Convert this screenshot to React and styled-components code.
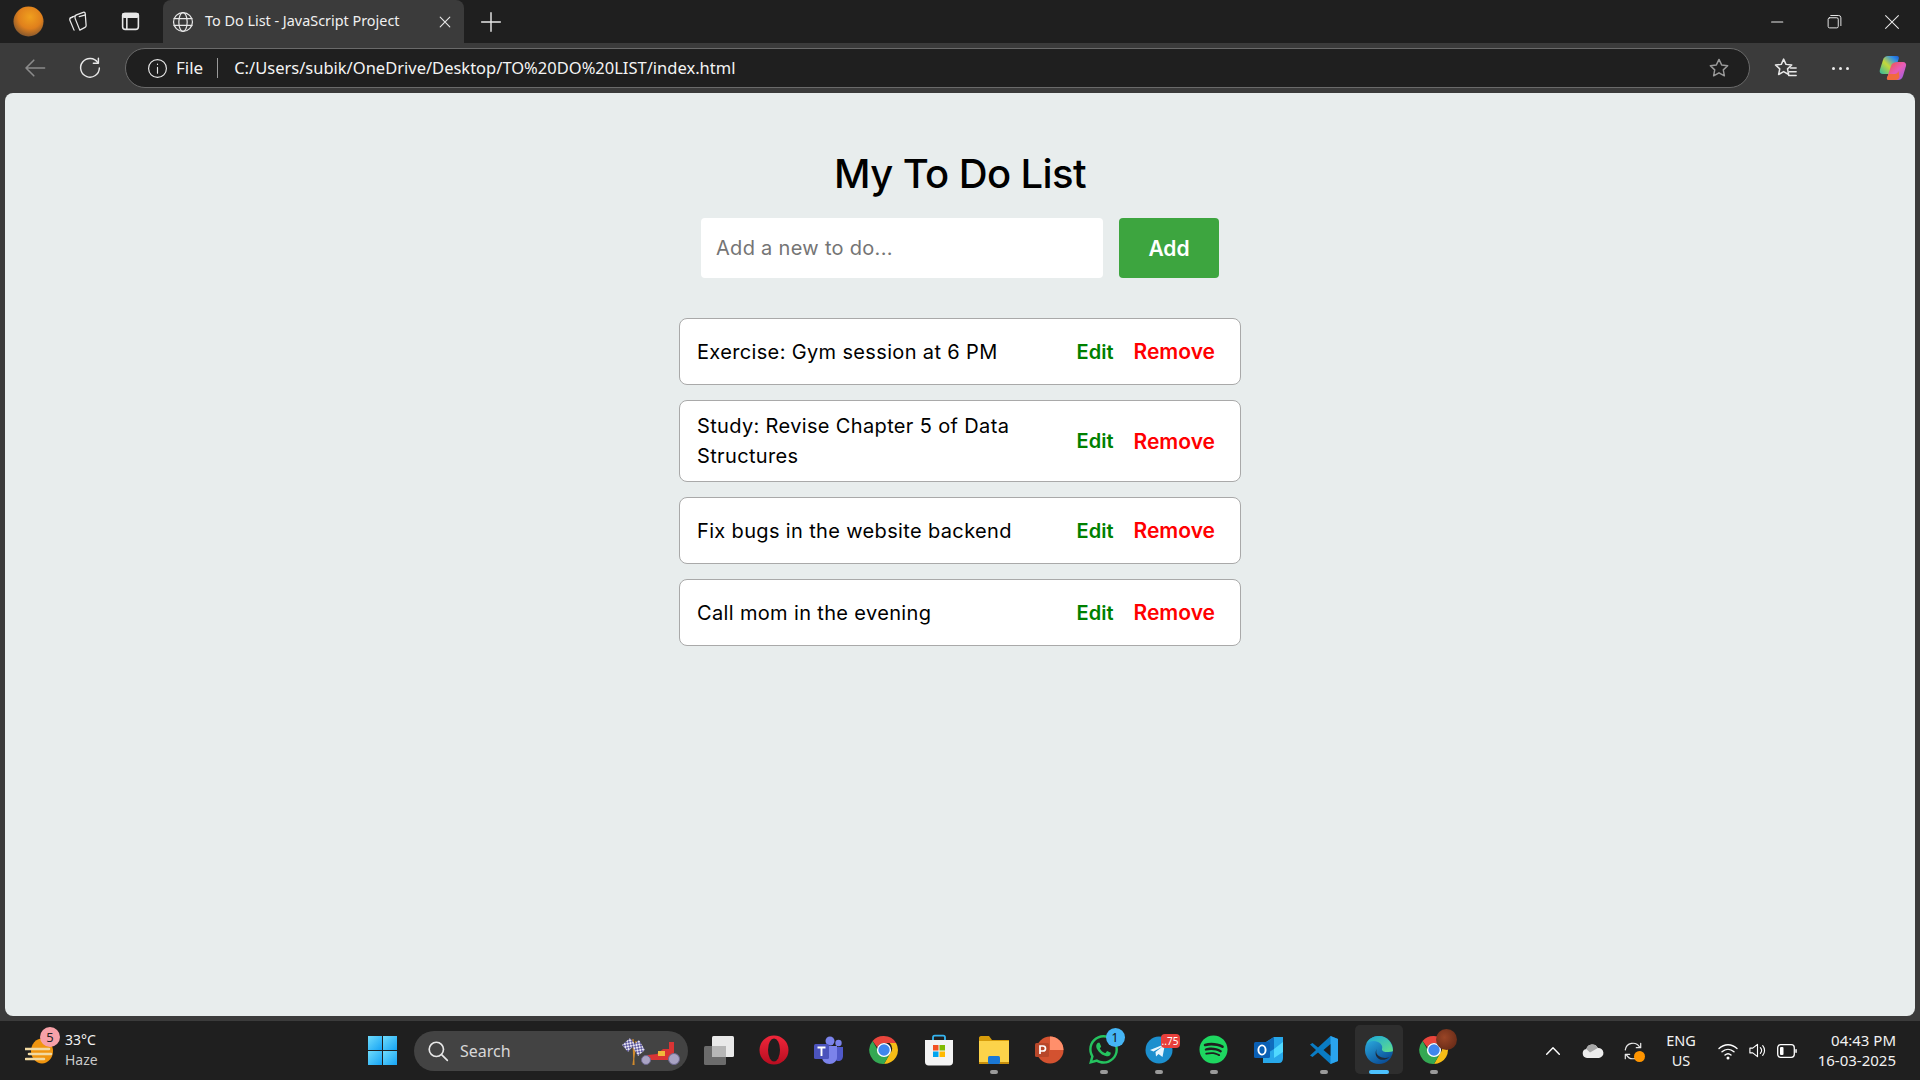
import React from 'react';
import styled, { createGlobalStyle } from 'styled-components';
import { FaSpotify, FaWhatsapp } from 'react-icons/fa';

const GlobalStyle = createGlobalStyle`
  * { box-sizing: border-box; }
  html, body { margin: 0; height: 100%; overflow: hidden; }
  body { font-family: "Noto Sans", "Open Sans", sans-serif; background: #3b3b3b; }
`;

const todos = [
  'Exercise: Gym session at 6 PM',
  'Study: Revise Chapter 5 of Data Structures',
  'Fix bugs in the website backend',
  'Call mom in the evening',
];

const Line = ({ size = 20, children, color = '#e8e8e8', sw = 1.3 }) => (
  <svg width={size} height={size} viewBox="0 0 20 20" fill="none" stroke={color} strokeWidth={sw} strokeLinecap="round" strokeLinejoin="round">
    {children}
  </svg>
);

const ProfileBall = () => (
  <svg width="31" height="31" viewBox="0 0 32 32">
    <defs>
      <radialGradient id="ball" cx="55%" cy="35%" r="70%">
        <stop offset="0" stopColor="#f0a01e" />
        <stop offset="0.55" stopColor="#e0801c" />
        <stop offset="1" stopColor="#7a5230" />
      </radialGradient>
    </defs>
    <circle cx="16" cy="16" r="15.5" fill="url(#ball)" />
  </svg>
);

const GlobeIcon = () => (
  <Line size={22} sw={1.1}>
    <circle cx="10" cy="10" r="8.6" />
    <ellipse cx="10" cy="10" rx="3.8" ry="8.6" />
    <path d="M1.8 7h16.4M1.8 13h16.4" />
  </Line>
);

const StarOutline = ({ color }) => (
  <Line size={22} color={color}>
    <path d="M10 2.2l2.4 5 5.5.7-4 3.8 1 5.4-4.9-2.7-4.9 2.7 1-5.4-4-3.8 5.5-.7z" />
  </Line>
);

const Copilot = () => (
  <svg width="28" height="28" viewBox="0 0 28 28">
    <defs>
      <linearGradient id="cpA" x1="0" y1="1" x2="1" y2="0">
        <stop offset="0" stopColor="#2bb6a3" />
        <stop offset="0.45" stopColor="#c6d83a" />
        <stop offset="0.8" stopColor="#2f8fe8" />
        <stop offset="1" stopColor="#1e58d0" />
      </linearGradient>
      <linearGradient id="cpB" x1="0" y1="0" x2="1" y2="1">
        <stop offset="0" stopColor="#f0533a" />
        <stop offset="0.5" stopColor="#e85cb5" />
        <stop offset="1" stopColor="#8f5de8" />
      </linearGradient>
    </defs>
    <path d="M9 2h9c1.5 0 2.2 1 1.8 2.4L16 16c-1 3-2.4 4-5 4H4c-2.5 0-3.8-1.6-3.2-4L4 6c.9-2.8 2.4-4 5-4z" fill="url(#cpA)" />
    <path d="M19 8h5c2.3 0 3.6 1.8 3 4l-3 10c-.9 2.7-2.4 4-5 4h-9c-1.5 0-2.2-1-1.8-2.4L12 12c1-3 3.4-4 7-4z" fill="url(#cpB)" />
    <path d="M10 20h6c1.6 0 2.8-1 3.5-3l1 6c-.6 2-2 3-4 3h-7c-1.4 0-2-1-1.5-2.4z" fill="#f26a3d" />
  </svg>
);

const ChromeIcon = () => (
  <svg width="30" height="30" viewBox="0 0 30 30">
    <path d="M15 1a14 14 0 0 1 12.1 7H15a7 7 0 0 0-6.6 4.6L3.6 6A14 14 0 0 1 15 1z" fill="#e8453c" />
    <path d="M27.1 8A14 14 0 0 1 15 29l6-10.5a7 7 0 0 0-.4-10.5z" fill="#f6bd16" />
    <path d="M15 29A14 14 0 0 1 3.6 6l5.9 10.2A7 7 0 0 0 21 18.5L15 29z" fill="#34a853" />
    <circle cx="15" cy="15" r="6.4" fill="#3f86ee" stroke="#fff" strokeWidth="1.4" />
  </svg>
);

const apps = [
  {
    key: 'copy',
    icon: (
      <svg width="32" height="30" viewBox="0 0 32 30">
        <rect x="1" y="11" width="22" height="19" rx="1.5" fill="#6b6b6b" />
        <rect x="9" y="1" width="22" height="21" rx="1.5" fill="#e9e9e9" />
        <rect x="9" y="11" width="14" height="11" fill="#b6b6b6" />
      </svg>
    ),
  },
  {
    key: 'opera',
    icon: (
      <svg width="30" height="30" viewBox="0 0 30 30">
        <defs>
          <linearGradient id="operaRed" x1="0" y1="0" x2="0" y2="1">
            <stop offset="0" stopColor="#f0263a" />
            <stop offset="1" stopColor="#b80d20" />
          </linearGradient>
        </defs>
        <ellipse cx="15" cy="15" rx="14.5" ry="14.5" fill="url(#operaRed)" />
        <ellipse cx="15" cy="15" rx="6" ry="11.5" fill="#1f1f1f" />
      </svg>
    ),
  },
  {
    key: 'teams',
    icon: (
      <svg width="32" height="30" viewBox="0 0 32 30">
        <circle cx="25.5" cy="8" r="3.2" fill="#7b83eb" />
        <circle cx="17" cy="6" r="4.5" fill="#7b83eb" />
        <path d="M21 12h9v9c0 3-2 5-4.5 5S21 24 21 21z" fill="#5059c9" />
        <path d="M9 11h15v11c0 4-3 7-7.5 7S9 26 9 22z" fill="#7b83eb" />
        <rect x="1" y="9" width="15" height="15" rx="1.5" fill="#4b53bc" />
        <path d="M4.5 12.5h8M8.5 12.5v8.5" stroke="#fff" strokeWidth="1.9" />
      </svg>
    ),
  },
  { key: 'chrome', icon: <ChromeIcon /> },
  {
    key: 'store',
    icon: (
      <svg width="30" height="32" viewBox="0 0 30 32">
        <path d="M9 7V3.5c0-1 .7-1.8 1.8-1.8h8.4c1.1 0 1.8.8 1.8 1.8V7" fill="none" stroke="#35b4ef" strokeWidth="1.8" />
        <path d="M1 6h28v22c0 2-1.4 3.5-3.5 3.5h-21C2.4 31.5 1 30 1 28z" fill="#f3f3f3" />
        <rect x="9" y="11" width="5.5" height="5.5" fill="#f25022" />
        <rect x="15.5" y="11" width="5.5" height="5.5" fill="#7fba00" />
        <rect x="9" y="17.5" width="5.5" height="5.5" fill="#00a4ef" />
        <rect x="15.5" y="17.5" width="5.5" height="5.5" fill="#ffb900" />
      </svg>
    ),
  },
  {
    key: 'files',
    running: true,
    icon: (
      <svg width="30" height="28" viewBox="0 0 30 28">
        <path d="M0 2c0-1 .7-2 2-2h8l3 4h17v24H0z" fill="#d79c0a" />
        <rect x="0" y="5" width="30" height="23" fill="#fcd34a" />
        <rect x="0" y="26" width="30" height="2" fill="#c98f0c" />
        <rect x="9" y="20" width="12" height="8" rx="1.5" fill="#1a78d6" />
      </svg>
    ),
  },
  {
    key: 'ppt',
    icon: (
      <svg width="30" height="30" viewBox="0 0 30 30">
        <circle cx="16" cy="15" r="13.5" fill="#d35230" />
        <path d="M16 1.5A13.5 13.5 0 0 1 29.5 15H16z" fill="#ff8f6b" />
        <rect x="1" y="8" width="14" height="14" rx="1.5" fill="#b7472a" />
        <path d="M6 19v-8h3a2.5 2.5 0 0 1 0 5H6" fill="none" stroke="#fff" strokeWidth="1.7" />
      </svg>
    ),
  },
  { key: 'whatsapp', running: true, badge: '1', icon: <FaWhatsapp size={33} color="#25c35f" /> },
  {
    key: 'telegram',
    running: true,
    badge: '..75',
    badgeRed: true,
    icon: (
      <svg width="30" height="30" viewBox="0 0 30 30">
        <circle cx="15" cy="15" r="13.5" fill="#1c8fce" />
        <path d="M6 15l15-6-2.5 13-4-3-2.5 2.5-.5-4.5 7-5.5-9 5z" fill="#e8f6fd" />
      </svg>
    ),
  },
  { key: 'spotify', running: true, icon: <FaSpotify size={29} color="#1ed760" /> },
  {
    key: 'outlook',
    icon: (
      <svg width="30" height="28" viewBox="0 0 30 28">
        <path d="M9 8l11-7h9v21c0 3-1.5 5-4 5H9z" fill="#28a8ea" />
        <path d="M9 8l11-7v12l-11 7z" fill="#0f6cbd" />
        <path d="M20 13l9-7v10l-9 6z" fill="#50d9ff" />
        <rect x="0" y="6" width="16" height="16" rx="1.5" fill="#0a5fb4" />
        <ellipse cx="8" cy="14" rx="3.6" ry="4.6" fill="none" stroke="#fff" strokeWidth="1.9" />
      </svg>
    ),
  },
  {
    key: 'vscode',
    running: true,
    icon: (
      <svg width="30" height="30" viewBox="0 0 30 30">
        <path d="M21.5 1L29 4v22l-7.5 3L9 17.5 3.5 22 1 20.5 7 15 1 9.500 3.500 8 9 12.500z" fill="#0a7cc4" />
        <path d="M21.5 1L29 4v22l-7.5 3z" fill="#2aa4ee" />
        <path d="M21.5 9l-7 6 7 6z" fill="#1f1f1f" />
      </svg>
    ),
  },
  {
    key: 'edge',
    active: true,
    icon: (
      <svg width="30" height="30" viewBox="0 0 30 30">
        <defs>
          <linearGradient id="edgeA" x1="0" y1="0" x2="0.6" y2="1">
            <stop offset="0" stopColor="#2fb6e8" />
            <stop offset="1" stopColor="#0b4f98" />
          </linearGradient>
          <linearGradient id="edgeB" x1="0" y1="0" x2="1" y2="1">
            <stop offset="0" stopColor="#1aa7dc" />
            <stop offset="1" stopColor="#62e08a" />
          </linearGradient>
        </defs>
        <circle cx="15" cy="15" r="14" fill="url(#edgeA)" />
        <path d="M29 16C29 8 23 1 15 1 9 1 4 4 2 9c3-3 8-4 12-2 3 1.5 5 4 4 7-.5 1.5 1.5 3 4.5 3 3.5 0 6.5-.5 6.5-1z" fill="url(#edgeB)" />
        <path d="M13 14c-2.5 3-1.5 8 2 10 3 1.5 7 1 10-1.5L28 20c-2 2.5-6 3.5-10 2.5-5-1.5-7-5-5-8.500z" fill="#1f2a38" />
      </svg>
    ),
  },
  {
    key: 'chromeProfile',
    running: true,
    icon: <ChromeIcon />,
    avatar: true,
  },
];

export default function App() {
  return (
    <Window>
      <GlobalStyle />
      <TabStrip>
        <StripSlot $w={56}><ProfileBall /></StripSlot>
        <StripSlot $w={42}>
          <Line size={23} sw={1.1}>
            <path d="M8.5 4.500l6.500-2.500c.8-.3 1.500.2 1.700 1l.8 10.500c0 .8-.3 1.300-1 1.600l-4.500 2.400-4-10c-.3-.8-.2-2.500.5-3z" />
            <path d="M6 5.800L4 7c-.7.4-1 1-.7 1.800L7 17.500" />
            <path d="M8.500 4.800L3.500 7M11.500 5.800l5.500-1.500" />
          </Line>
        </StripSlot>
        <StripSlot $w={65}>
          <Line size={21} sw={1.5}>
            <rect x="2.5" y="2.5" width="15" height="15" rx="2.5" />
            <rect x="2.5" y="2.5" width="15" height="3.5" rx="1.5" fill="#e8e8e8" />
            <path d="M6.500 3v14" />
          </Line>
        </StripSlot>
        <ActiveTab>
          <GlobeIcon />
          <TabTitle>To Do List - JavaScript Project</TabTitle>
          <TabClose>
            <Line size={16} sw={1.4}><path d="M4 4l12 12M16 4L4 16" /></Line>
          </TabClose>
        </ActiveTab>
        <StripSlot $w={54}>
          <Line size={22} sw={1.3}><path d="M10 1.500v17M1.500 10h17" /></Line>
        </StripSlot>
        <WindowControls>
          <StripSlot $w={57}><Line size={16}><path d="M2 10h14" /></Line></StripSlot>
          <StripSlot $w={57}>
            <Line size={15}>
              <rect x="1.5" y="5" width="13.5" height="13.5" rx="2" />
              <path d="M5 2h10.500a3 3 0 0 1 3 3v10.500" />
            </Line>
          </StripSlot>
          <StripSlot $w={57}><Line size={16}><path d="M2 2l16 16M18 2L2 18" /></Line></StripSlot>
        </WindowControls>
      </TabStrip>

      <Toolbar>
        <StripSlot $w={55}>
          <Line size={24} color="#8b8b8b"><path d="M18 10H2.500M9 3.500L2.500 10 9 16.500" /></Line>
        </StripSlot>
        <StripSlot $w={55}>
          <Line size={24} sw={1.2}>
            <path d="M16.500 5.500A7.800 7.800 0 1 0 17.800 10" />
            <path d="M17 1.800v4.200h-4.200" />
          </Line>
        </StripSlot>
        <AddressBar>
          <Line size={21} sw={1.1}>
            <circle cx="10" cy="10" r="8.5" />
            <path d="M10 9v5.500M10 5.800v.4" />
          </Line>
          <FileLabel>File</FileLabel>
          <AddressDivider />
          <AddressUrl>C:/Users/subik/OneDrive/Desktop/TO%20DO%20LIST/index.html</AddressUrl>
          <StarHolder><StarOutline color="#9a9a9a" /></StarHolder>
        </AddressBar>
        <StripSlot $w={55}>
          <Line size={25} sw={1.2}>
            <path d="M8.500 2.500l1.900 4.200 4.600.5-3.400 3.100.9 4.500-4-2.300-4 2.300.9-4.500-3.400-3.100 4.600-.5z" />
            <path d="M14 9.500h4.500M13 12.500h5.500M12.500 15.500h6" />
          </Line>
        </StripSlot>
        <StripSlot $w={55}><MoreDots><i /><i /><i /></MoreDots></StripSlot>
        <StripSlot $w={50}><Copilot /></StripSlot>
      </Toolbar>

      <Page>
        <Title>My To Do List</Title>
        <AddForm onSubmit={(e) => e.preventDefault()}>
          <TodoInput placeholder="Add a new to do..." readOnly />
          <AddButton type="button">Add</AddButton>
        </AddForm>
        <TodoList>
          {todos.map((t) => (
            <TodoItem key={t}>
              <TodoText>{t}</TodoText>
              <Actions>
                <ActionButton type="button" $color="#008000" $size={20}>Edit</ActionButton>
                <ActionButton type="button" $color="#ff0000" $size={21}>Remove</ActionButton>
              </Actions>
            </TodoItem>
          ))}
        </TodoList>
      </Page>

      <Taskbar>
        <Weather>
          <WeatherIcon>
            <svg width="30" height="26" viewBox="0 0 30 26">
              <ellipse cx="17" cy="13" rx="11" ry="12.5" fill="#f0950f" />
              <path d="M0 11h24M4 16h22M1 21h18" stroke="#f1d9a2" strokeWidth="2.6" strokeLinecap="round" />
            </svg>
            <WeatherBadge>5</WeatherBadge>
          </WeatherIcon>
          <WeatherText>
            <span>33°C</span>
            <span>Haze</span>
          </WeatherText>
        </Weather>
        <StartLogo>
          <i /><i /><i /><i />
        </StartLogo>
        <SearchPill>
          <Line size={22} sw={1.5}>
            <circle cx="8.5" cy="8.5" r="6.5" />
            <path d="M13.500 13.500l5 5" />
          </Line>
          <SearchLabel>Search</SearchLabel>
          <SearchArt>
            <svg width="60" height="30" viewBox="0 0 60 30">
              <defs>
                <pattern id="checker" width="4" height="4" patternUnits="userSpaceOnUse" patternTransform="rotate(35)">
                  <rect width="4" height="4" fill="#e6e4f2" />
                  <rect width="2" height="2" fill="#5f5aa0" />
                  <rect x="2" y="2" width="2" height="2" fill="#5f5aa0" />
                </pattern>
              </defs>
              <path d="M11 3l1 26M14 5l-3 24" stroke="#d08a2c" strokeWidth="1.2" fill="none" />
              <path d="M0 9l8-7 5 6-7 8z" fill="url(#checker)" />
              <path d="M10 10l7-6 6 10-7 6z" fill="url(#checker)" />
              <path d="M20 24l6-5 9-1 6-5h6V6h5v14l-2 4z" fill="#d93434" />
              <rect x="36" y="15" width="7" height="5" fill="#f0b93a" />
              <circle cx="24" cy="24" r="4.5" fill="#a9a3c4" stroke="#6e6890" />
              <circle cx="52" cy="23" r="5.5" fill="#a9a3c4" stroke="#6e6890" />
            </svg>
          </SearchArt>
        </SearchPill>
        <AppRow>
          {apps.map((a) => (
            <AppSlot key={a.key}>
              <AppButton $active={a.active}>
                {a.icon}
                {a.badge && <AppBadge $red={a.badgeRed}>{a.badge}</AppBadge>}
                {a.avatar && <AvatarDot />}
              </AppButton>
              {(a.running || a.active) && <RunDot $active={a.active} />}
            </AppSlot>
          ))}
        </AppRow>
        <Tray>
          <TraySlot $w={40}>
            <Line size={18} color="#fff" sw={1.6}><path d="M3 13.500L10 6.500l7 7" /></Line>
          </TraySlot>
          <TraySlot $w={40}>
            <svg width="22" height="14" viewBox="0 0 22 14">
              <path d="M5 14a4.500 4.500 0 0 1-.7-8.900A6.200 6.200 0 0 1 15.800 4 5 5 0 0 1 17 14z" fill="#ededed" />
              <path d="M4.300 5.100A6.200 6.200 0 0 1 15.800 4L8 8.500z" fill="#a8a8a8" />
            </svg>
          </TraySlot>
          <TraySlot $w={40}>
            <SyncHolder>
              <Line size={22} sw={1.1}>
                <path d="M3 9A7 7 0 0 1 16 6.500M17 3v4h-4" />
                <path d="M17 11a7 7 0 0 1-13 2.500M3 17v-4h4" />
              </Line>
              <SyncDot />
            </SyncHolder>
          </TraySlot>
          <LangBlock>
            <span>ENG</span>
            <span>US</span>
          </LangBlock>
          <TraySlot $w={38}>
            <Line size={20} color="#fff" sw={1.4}>
              <path d="M1 7.500c5.500-5 12.500-5 18 0M4 10.800c3.600-3.300 8.400-3.300 12 0M7 14c1.800-1.600 4.200-1.600 6 0" />
              <circle cx="10" cy="17" r=".8" fill="#fff" />
            </Line>
          </TraySlot>
          <TraySlot $w={20}>
            <Line size={19} color="#fff" sw={1.2}>
              <path d="M2 7.500h3L10 3.500v13L5 12.500H2z" />
              <path d="M13 7a4.500 4.500 0 0 1 0 6M15.500 4.800a8 8 0 0 1 0 10.400" />
            </Line>
          </TraySlot>
          <TraySlot $w={40}>
            <svg width="20" height="14" viewBox="0 0 20 14" fill="none">
              <rect x=".7" y=".7" width="16.6" height="12.6" rx="3" stroke="#fff" strokeWidth="1.3" />
              <rect x="3" y="3" width="3.5" height="8" rx="1" fill="#fff" />
              <rect x="18.3" y="5" width="1.5" height="4" rx=".7" fill="#fff" />
            </svg>
          </TraySlot>
          <Clock>
            <span>04:43 PM</span>
            <span>16-03-2025</span>
          </Clock>
        </Tray>
      </Taskbar>
    </Window>
  );
}

const Window = styled.div`
  display: flex;
  flex-direction: column;
  width: 1920px;
  height: 1080px;
  background: #3b3b3b;
  color: #f2f2f2;
`;

const TabStrip = styled.div`
  display: flex;
  align-items: center;
  height: 43px;
  background: #1f1f1f;
`;

const StripSlot = styled.div`
  flex: 0 0 ${(p) => p.$w}px;
  display: flex;
  align-items: center;
  justify-content: center;
`;

const ActiveTab = styled.div`
  flex: 0 0 301px;
  align-self: stretch;
  display: flex;
  align-items: center;
  padding: 0 11px 0 9px;
  background: #3b3b3b;
  border-radius: 8px 8px 0 0;
`;

const TabTitle = styled.span`
  margin: 0 0 2px 11px;
  font-size: 14.4px;
  color: #f0f0f0;
  white-space: nowrap;
`;

const TabClose = styled.span`
  display: flex;
  margin-left: auto;
`;

const WindowControls = styled.div`
  display: flex;
  margin-left: auto;
`;

const Toolbar = styled.div`
  display: flex;
  align-items: center;
  height: 50px;
  padding: 0 2px 0 7px;
  background: #3b3b3b;
`;

const AddressBar = styled.div`
  flex: 1;
  display: flex;
  align-items: center;
  height: 40px;
  margin: 0 8px;
  padding: 0 19px 0 21px;
  background: #1f1f1f;
  border: 1px solid #6a6a6a;
  border-radius: 20px;
`;

const FileLabel = styled.span`
  margin: 0 0 2px 8px;
  font-size: 17px;
`;

const AddressDivider = styled.span`
  width: 1px;
  height: 20px;
  margin: 0 16px 0 14px;
  background: #9a9a9a;
`;

const AddressUrl = styled.span`
  margin-bottom: 2px;
  font-size: 16.5px;
  color: #f4f4f4;
  white-space: nowrap;
`;

const StarHolder = styled.span`
  display: flex;
  margin-left: auto;
`;

const MoreDots = styled.div`
  display: flex;
  gap: 4px;
  i {
    width: 3px;
    height: 3px;
    background: #eaeaea;
    border-radius: 50%;
  }
`;

const Page = styled.main`
  flex: 1;
  display: flex;
  flex-direction: column;
  align-items: center;
  margin: 0 5px;
  padding-top: 53px;
  background: #e8eded;
  border-radius: 8px;
  font-family: Inter, "Noto Sans", sans-serif;
  color: #000;
`;

const Title = styled.h1`
  margin: 0 0 17px;
  font-size: 40px;
  line-height: 55px;
  font-weight: 550;
  letter-spacing: -0.6px;
`;

const AddForm = styled.form`
  display: flex;
  gap: 16px;
  margin-bottom: 40px;
`;

const TodoInput = styled.input`
  width: 402px;
  height: 60px;
  padding: 0 15px;
  border: none;
  border-radius: 4px;
  background: #fff;
  font-family: inherit;
  font-size: 20px;
  letter-spacing: 0.3px;
  outline: none;
  &::placeholder {
    color: #757575;
  }
`;

const AddButton = styled.button`
  width: 100px;
  height: 60px;
  border: none;
  border-radius: 4px;
  background: #3da53f;
  color: #fff;
  font-family: inherit;
  font-size: 21px;
  font-weight: 600;
`;

const TodoList = styled.ul`
  display: flex;
  flex-direction: column;
  gap: 15px;
  width: 562px;
  margin: 0;
  padding: 0;
  list-style: none;
`;

const TodoItem = styled.li`
  display: flex;
  align-items: center;
  padding: 10px 17px;
  background: #fff;
  border: 1px solid #a9a9a9;
  border-radius: 8px;
`;

const TodoText = styled.span`
  flex: 1;
  padding-right: 40px;
  font-size: 20px;
  line-height: 30px;
  letter-spacing: 0.35px;
`;

const Actions = styled.div`
  display: flex;
  gap: 4px;
`;

const ActionButton = styled.button`
  height: 45px;
  padding: 0 8px;
  border: none;
  background: none;
  color: ${(p) => p.$color};
  font-family: inherit;
  font-size: ${(p) => p.$size}px;
  font-weight: 600;
`;

const Taskbar = styled.footer`
  display: flex;
  align-items: center;
  flex: 0 0 59px;
  margin-top: 5px;
  background: #1f1f1f;
`;

const Weather = styled.div`
  flex: 0 0 368px;
  display: flex;
  align-items: center;
  gap: 10px;
  padding-left: 25px;
`;

const WeatherIcon = styled.div`
  position: relative;
  display: flex;
  width: 30px;
`;

const WeatherBadge = styled.span`
  position: absolute;
  top: -11px;
  right: -5px;
  width: 20px;
  height: 20px;
  border-radius: 50%;
  background: #f7a1a8;
  color: #222;
  font-size: 13px;
  line-height: 20px;
  text-align: center;
`;

const WeatherText = styled.div`
  display: flex;
  flex-direction: column;
  margin-bottom: 2px;
  font-size: 14px;
  line-height: 20px;
  span + span {
    color: #c9c9c9;
  }
`;

const StartLogo = styled.div`
  flex: 0 0 29px;
  display: grid;
  grid-template-columns: 1fr 1fr;
  gap: 1px;
  height: 29px;
  margin-right: 17px;
  i {
    background: linear-gradient(135deg, #6fdcfb, #15a3f5);
  }
`;

const SearchPill = styled.div`
  flex: 0 0 274px;
  display: flex;
  align-items: center;
  height: 40px;
  margin-right: 3px;
  padding: 0 6px 0 13px;
  background: #434343;
  border-radius: 20px;
`;

const SearchLabel = styled.span`
  margin-left: 11px;
  font-size: 16px;
  color: #d8d8d8;
`;

const SearchArt = styled.span`
  display: flex;
  margin-left: auto;
`;

const AppRow = styled.div`
  display: flex;
  margin-bottom: 2px;
`;

const AppSlot = styled.div`
  position: relative;
  flex: 0 0 55px;
  display: flex;
  justify-content: center;
`;

const AppButton = styled.div`
  position: relative;
  display: flex;
  align-items: center;
  justify-content: center;
  width: 48px;
  height: 49px;
  background: ${(p) => (p.$active ? '#2e2e2e' : 'transparent')};
  border-radius: 5px;
`;

const AppBadge = styled.span`
  position: absolute;
  top: ${(p) => (p.$red ? '9px' : '3px')};
  right: 3px;
  min-width: 19px;
  height: ${(p) => (p.$red ? '14px' : '19px')};
  padding: 0 1px;
  background: ${(p) => (p.$red ? '#e8403c' : '#45b5f5')};
  border-radius: ${(p) => (p.$red ? '4px' : '50%')};
  color: ${(p) => (p.$red ? '#fff' : '#111')};
  font-size: ${(p) => (p.$red ? '10px' : '12px')};
  line-height: ${(p) => (p.$red ? '14px' : '19px')};
  text-align: center;
`;

const AvatarDot = styled.span`
  position: absolute;
  top: 4px;
  right: 1px;
  width: 21px;
  height: 21px;
  border-radius: 50%;
  background: radial-gradient(circle at 40% 40%, #9a4526, #5a2414);
`;

const RunDot = styled.span`
  position: absolute;
  bottom: 0;
  left: 50%;
  width: ${(p) => (p.$active ? '20px' : '8px')};
  height: 4px;
  transform: translateX(-50%);
  border-radius: 2px;
  background: ${(p) => (p.$active ? '#4cc2ff' : '#9a9a9a')};
`;

const Tray = styled.div`
  flex: 1;
  display: flex;
  align-items: center;
  padding: 0 24px 0 72px;
`;

const TraySlot = styled.div`
  flex: 0 0 ${(p) => p.$w}px;
  display: flex;
  justify-content: center;
`;

const SyncHolder = styled.div`
  position: relative;
  display: flex;
`;

const SyncDot = styled.span`
  position: absolute;
  right: -1px;
  bottom: 0;
  width: 11px;
  height: 11px;
  border-radius: 50%;
  background: #ff9500;
`;

const LangBlock = styled.div`
  flex: 0 0 56px;
  display: flex;
  flex-direction: column;
  align-items: center;
  margin-bottom: 2px;
  font-size: 14.5px;
  line-height: 20px;
`;

const Clock = styled.div`
  flex: 1;
  display: flex;
  flex-direction: column;
  align-items: flex-end;
  margin-bottom: 2px;
  font-size: 15px;
  line-height: 20px;
`;
